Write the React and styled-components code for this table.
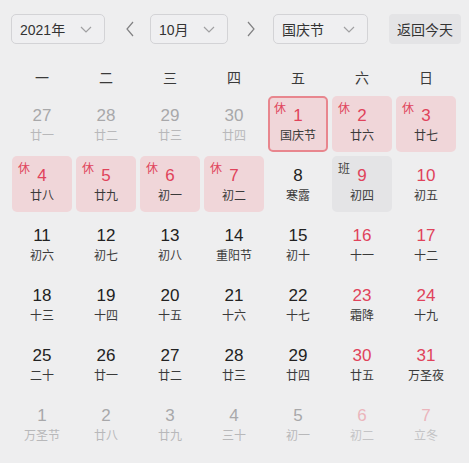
import React from 'react';
import styled, { createGlobalStyle } from 'styled-components';

const GlobalStyle = createGlobalStyle`
  body {
    margin: 0;
    background: #eeeeef;
    font-family: "Liberation Sans", "Noto Sans CJK SC", sans-serif;
  }
`;

const Page = styled.div`
  width: 469px;
  height: 463px;
  overflow: hidden;
  background: #eeeeef;
`;

const Toolbar = styled.div`
  display: flex;
  align-items: center;
  padding: 14px 0 0 11px;
  height: 30px;
`;

const Select = styled.div`
  box-sizing: border-box;
  flex: 0 0 ${(p) => p.width}px;
  width: ${(p) => p.width}px;
  height: 30px;
  border: 1px solid #d3d3d6;
  border-radius: 5px;
  background: #efeff1;
  display: flex;
  align-items: center;
  justify-content: space-between;
  padding: 0 12px 0 8px;
  font-family: "Liberation Sans", "Noto Sans CJK SC", sans-serif;
  font-size: 14px;
  color: #333;
`;

const Arrow = styled.button`
  flex: 0 0 45px;
  box-sizing: border-box;
  border: none;
  background: none;
  padding: 0 0 0 ${(p) => p.shift}px;
  width: 45px;
  height: 30px;
  display: flex;
  align-items: center;
  justify-content: center;
`;

const TodayButton = styled.button`
  flex: 0 0 72px;
  margin-left: 21px;
  width: 72px;
  height: 30px;
  border: none;
  border-radius: 4px;
  background: #e4e4e6;
  font-family: "Noto Sans CJK SC", sans-serif;
  font-size: 14px;
  color: #333;
  padding: 0;
`;

const Weekdays = styled.div`
  display: grid;
  grid-template-columns: repeat(7, 64px);
  margin: 20px 0 0 10px;
  height: 26px;
  align-items: center;
`;

const Weekday = styled.div`
  text-align: center;
  font-family: "Noto Sans CJK SC", sans-serif;
  font-size: 14px;
  color: #3a3a3a;
`;

const Days = styled.div`
  display: grid;
  grid-template-columns: repeat(7, 60px);
  grid-auto-rows: 56px;
  gap: 4px;
  margin: 6px 0 0 12px;
`;

const bgFor = (kind) =>
  kind === 'rest' ? '#f0d6d9' : kind === 'work' ? '#e4e4e6' : 'transparent';

const Cell = styled.div`
  position: relative;
  box-sizing: border-box;
  border-radius: 5px;
  background: ${(p) => bgFor(p.kind)};
  border: ${(p) => (p.selected ? '2px solid #e8868e' : '2px solid transparent')};
  display: flex;
  flex-direction: column;
  align-items: center;
  padding-top: 7px;
`;

const Tag = styled.span`
  position: absolute;
  left: 4px;
  top: 1px;
  font-family: "Noto Sans CJK SC", sans-serif;
  font-size: 12px;
  color: ${(p) => (p.work ? '#444' : '#e0455c')};
`;

const Num = styled.div`
  font-family: "Liberation Sans", sans-serif;
  font-size: 17px;
  line-height: 22px;
  color: ${(p) => p.color};
`;

const Lunar = styled.div`
  font-family: "Noto Sans CJK SC", sans-serif;
  font-size: 12px;
  line-height: 16px;
  color: ${(p) => p.color};
`;

const Chevron = ({ dir }) => {
  const d = dir === 'left' ? 'M7 1 L1 8 L7 15' : dir === 'right' ? 'M1 1 L7 8 L1 15' : 'M1 1 L6 6 L11 1';
  const w = dir === 'down' ? 12 : 8;
  const h = dir === 'down' ? 7 : 16;
  return (
    <svg width={w} height={h} viewBox={`0 0 ${w} ${h}`}>
      <path d={d} fill="none" stroke={dir === 'down' ? '#a0a0a2' : '#808082'} strokeWidth="1.2" />
    </svg>
  );
};

const weeks = [
  [[27, '廿一', 'prev'], [28, '廿二', 'prev'], [29, '廿三', 'prev'], [30, '廿四', 'prev'], [1, '国庆节', 'rest', true], [2, '廿六', 'rest'], [3, '廿七', 'rest']],
  [[4, '廿八', 'rest'], [5, '廿九', 'rest'], [6, '初一', 'rest'], [7, '初二', 'rest'], [8, '寒露'], [9, '初四', 'work'], [10, '初五']],
  [[11, '初六'], [12, '初七'], [13, '初八'], [14, '重阳节'], [15, '初十'], [16, '十一'], [17, '十二']],
  [[18, '十三'], [19, '十四'], [20, '十五'], [21, '十六'], [22, '十七'], [23, '霜降'], [24, '十九']],
  [[25, '二十'], [26, '廿一'], [27, '廿二'], [28, '廿三'], [29, '廿四'], [30, '廿五'], [31, '万圣夜']],
  [[1, '万圣节', 'next'], [2, '廿八', 'next'], [3, '廿九', 'next'], [4, '三十', 'next'], [5, '初一', 'next'], [6, '初二', 'next'], [7, '立冬', 'next']],
];

const colors = (kind, weekend) => {
  if (kind === 'prev' || kind === 'next') {
    return weekend ? ['#ebb5bc', '#c4c4c6'] : ['#a8a8aa', '#b8b8ba'];
  }
  if (kind === 'rest' || weekend) return ['#e0435b', '#3a3a3a'];
  return ['#222', '#3a3a3a'];
};

export default function App() {
  return (
    <Page>
      <GlobalStyle />
      <Toolbar>
        <Select width={94}>
          <span>2021年</span>
          <Chevron dir="down" />
        </Select>
        <Arrow shift={5}>
          <Chevron dir="left" />
        </Arrow>
        <Select width={78}>
          <span>10月</span>
          <Chevron dir="down" />
        </Select>
        <Arrow shift={0}>
          <Chevron dir="right" />
        </Arrow>
        <Select width={95}>
          <span>国庆节</span>
          <Chevron dir="down" />
        </Select>
        <TodayButton>返回今天</TodayButton>
      </Toolbar>
      <Weekdays>
        {['一', '二', '三', '四', '五', '六', '日'].map((w) => (
          <Weekday key={w}>{w}</Weekday>
        ))}
      </Weekdays>
      <Days>
        {weeks.map((week, wi) =>
          week.map(([n, lunar, kind, selected], di) => {
            const [nc, lc] = colors(kind, di >= 5);
            return (
              <Cell key={`${wi}-${di}`} kind={kind} selected={selected}>
                {kind === 'rest' && <Tag>休</Tag>}
                {kind === 'work' && <Tag work>班</Tag>}
                <Num color={nc}>{n}</Num>
                <Lunar color={lc}>{lunar}</Lunar>
              </Cell>
            );
          })
        )}
      </Days>
    </Page>
  );
}
